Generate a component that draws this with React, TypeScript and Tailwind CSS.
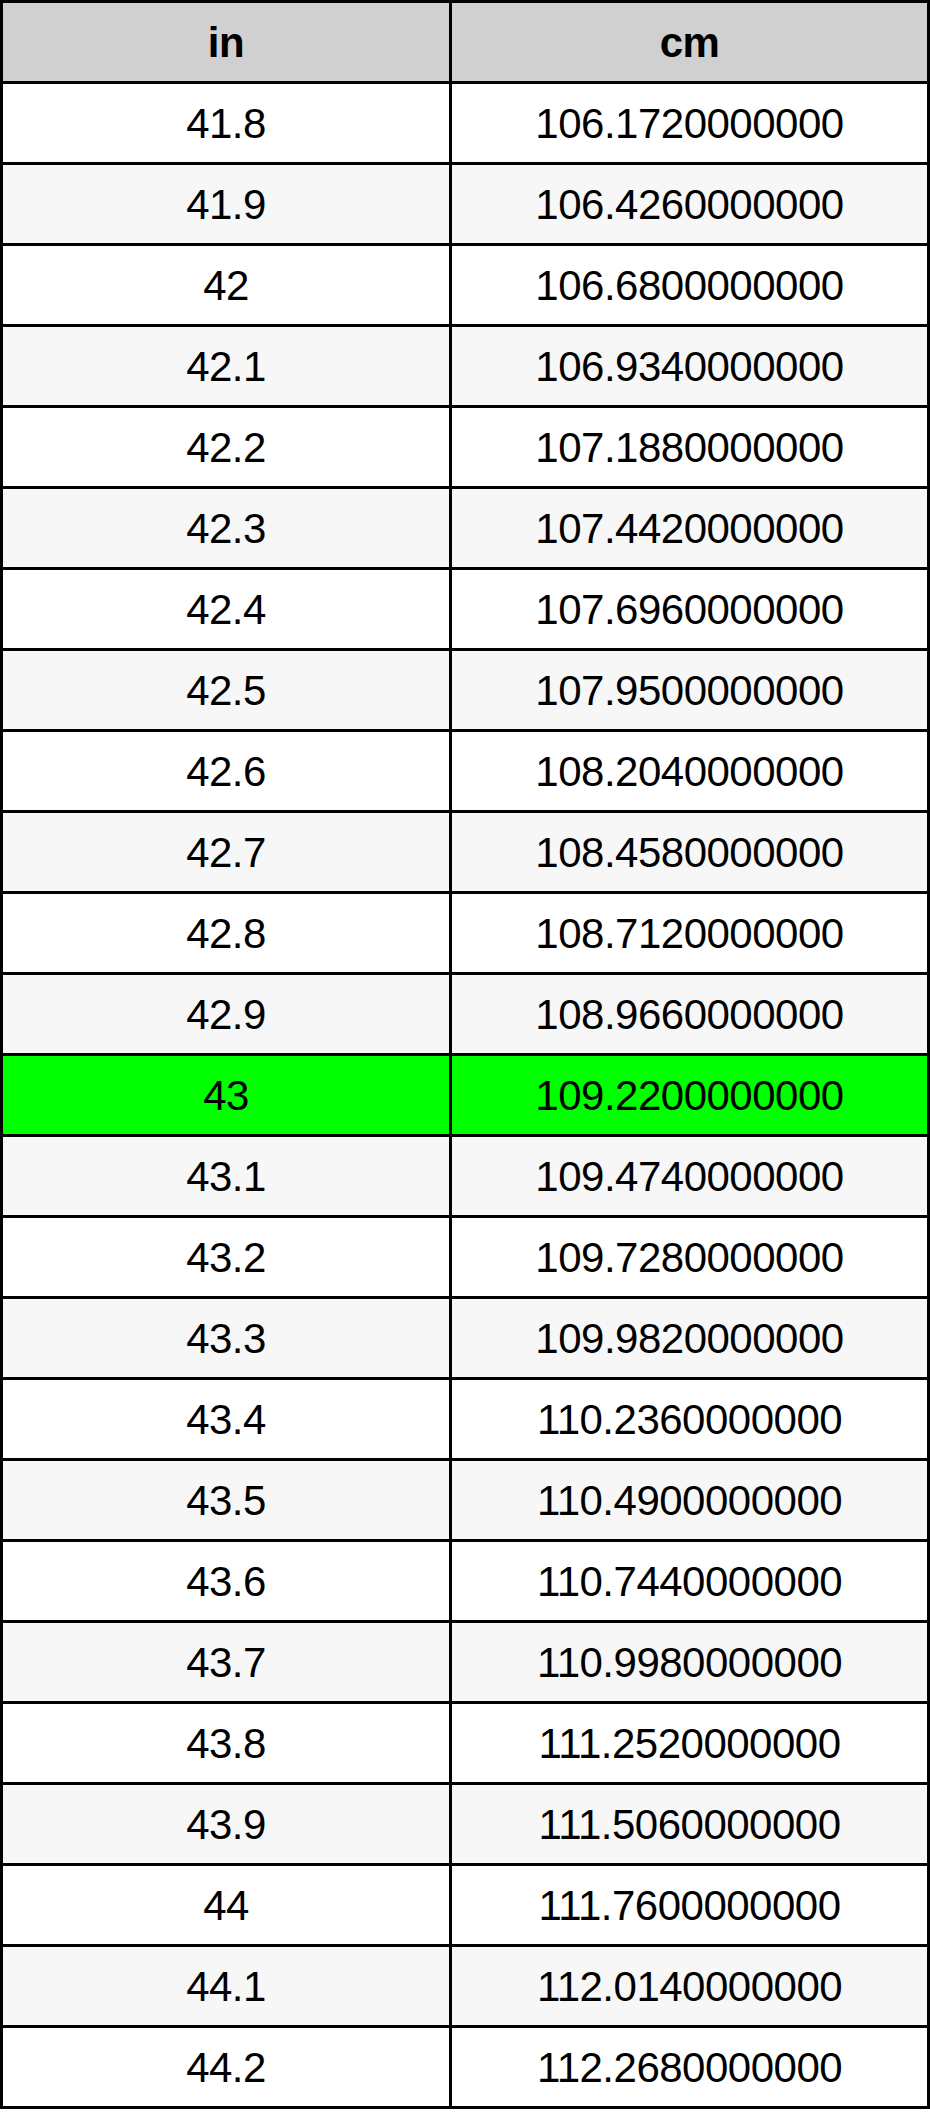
import React from "react";

const rows: [string, string][] = [
  ["41.8", "106.1720000000"],
  ["41.9", "106.4260000000"],
  ["42", "106.6800000000"],
  ["42.1", "106.9340000000"],
  ["42.2", "107.1880000000"],
  ["42.3", "107.4420000000"],
  ["42.4", "107.6960000000"],
  ["42.5", "107.9500000000"],
  ["42.6", "108.2040000000"],
  ["42.7", "108.4580000000"],
  ["42.8", "108.7120000000"],
  ["42.9", "108.9660000000"],
  ["43", "109.2200000000"],
  ["43.1", "109.4740000000"],
  ["43.2", "109.7280000000"],
  ["43.3", "109.9820000000"],
  ["43.4", "110.2360000000"],
  ["43.5", "110.4900000000"],
  ["43.6", "110.7440000000"],
  ["43.7", "110.9980000000"],
  ["43.8", "111.2520000000"],
  ["43.9", "111.5060000000"],
  ["44", "111.7600000000"],
  ["44.1", "112.0140000000"],
  ["44.2", "112.2680000000"],
];

export default function App() {
  return (
    <div className="w-[930px] bg-white" style={{ fontFamily: '"Liberation Sans", Arial, sans-serif' }}>
      <div className="grid grid-cols-[446px_475px] gap-[3px] bg-black p-[3px] text-[42px] tracking-[-0.5px] text-black">
        <div className="flex h-[78px] items-center justify-center bg-[#d0d0d0] font-bold">in</div>
        <div className="flex h-[78px] items-center justify-center bg-[#d0d0d0] font-bold">cm</div>
        {rows.map(([a, b], i) => {
          const bg = a === "43" ? "bg-[#00ff00]" : i % 2 === 0 ? "bg-white" : "bg-[#f7f7f7]";
          return (
            <React.Fragment key={a}>
              <div className={`flex h-[78px] items-center justify-center ${bg}`}>{a}</div>
              <div className={`flex h-[78px] items-center justify-center ${bg}`}>{b}</div>
            </React.Fragment>
          );
        })}
      </div>
    </div>
  );
}
